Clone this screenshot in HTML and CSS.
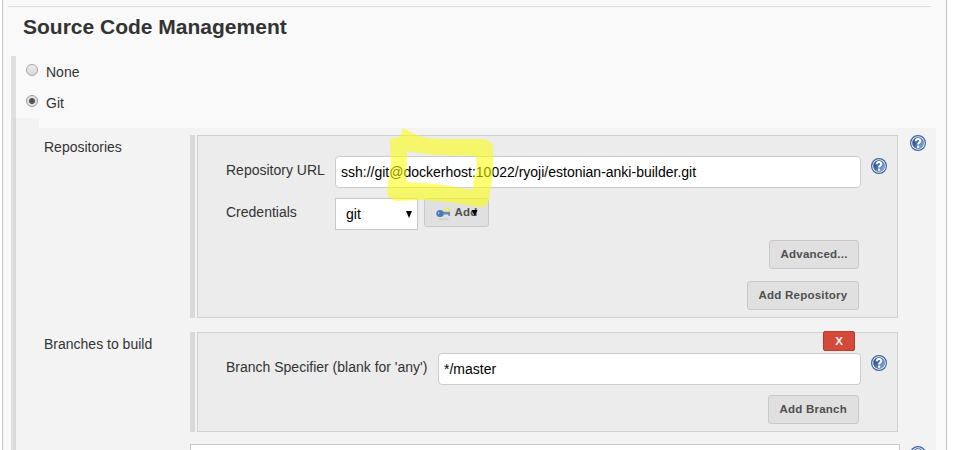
FILE: index.html
```html
<!DOCTYPE html>
<html lang="en">
<head>
<meta charset="utf-8">
<title>Source Code Management</title>
<link rel="stylesheet" href="styles.css">
</head>
<body>
<svg class="defs" width="0" height="0" aria-hidden="true">
  <defs>
    <linearGradient id="blue" x1="0" y1="0" x2="1" y2="0.6"><stop offset="0.1" stop-color="#1f4583"/><stop offset="1" stop-color="#7ea3d3"/></linearGradient>
    <symbol id="help" viewBox="0 0 16 16">
      <circle cx="8" cy="8" r="7.4" fill="#fff" stroke="#3d639f" stroke-width="1.2"/>
      <circle cx="8" cy="8" r="5.7" fill="url(#blue)" stroke="#3d639f" stroke-width="0.4"/>
      <path d="M5.7 6.3C5.8 3.3 10.3 3.3 10.3 5.9C10.3 7.6 8.1 7.6 8.1 9.6" fill="none" stroke="#fff" stroke-width="2"/>
      <rect x="7" y="10.6" width="2.2" height="2.1" fill="#fff"/>
    </symbol>
  </defs>
</svg>
<main class="page">
  <hr class="rule">
  <h1>Source Code Management</h1>
  <section class="scm">
    <label class="choice"><span class="radio"></span>None</label>
    <label class="choice"><span class="radio on"></span>Git</label>
    <div class="tab"></div>
    <div class="git">
      <div class="row repos">
        <div class="name">Repositories</div>
        <div class="bar"></div>
        <div class="box">
          <div class="line url">
            <span class="label">Repository URL</span>
            <div class="input">ssh://git@dockerhost:10022/ryoji/estonian-anki-builder.git</div>
            <svg class="help"><use href="#help"/></svg>
          </div>
          <div class="line cred">
            <span class="label">Credentials</span>
            <div class="select">git<i class="arrow"></i></div>
            <div class="button add">
              <svg class="key" viewBox="0 0 16 16"><ellipse cx="8" cy="14" rx="6" ry="1" fill="#d0d0d0"/><path d="M6 6.2H15V10.5H13V9H6Z" fill="#698bb5"/><ellipse cx="4.3" cy="8" rx="4" ry="3.8" fill="#4b7bba"/><circle cx="2.7" cy="7.5" r="0.8" fill="#d7e3f0"/><circle cx="12.2" cy="3.6" r="2.4" fill="#f1e64d"/><circle cx="12.2" cy="3.6" r="1" fill="#fff8a0"/></svg>
              <span>Add</span><i class="arrow"></i>
            </div>
          </div>
          <div class="button advanced">Advanced...</div>
          <div class="button repository">Add Repository</div>
          <svg class="marker" width="110" height="84" viewBox="386 126 110 84"><path fill-rule="evenodd" d="M403 128L417 135C424 138 434 139 447 139L484 139Q493 141 493 148V173L489 200Q487 208 480 207L447 202L424 200L397 201Q387 199 387 191L391 162L390 141Q392 137 400 137ZM407 151V163L406 182L437 184L454 187L473 190L474 176L477 172L476 156L437 155L420 153Z"/></svg>
        </div>
        <svg class="help"><use href="#help"/></svg>
      </div>
      <div class="row branches">
        <div class="name">Branches to build</div>
        <div class="bar"></div>
        <div class="box">
          <div class="delete">X</div>
          <div class="line spec">
            <span class="label wide">Branch Specifier (blank for 'any')</span>
            <div class="input">*/master</div>
            <svg class="help"><use href="#help"/></svg>
          </div>
          <div class="button branch">Add Branch</div>
        </div>
      </div>
      <div class="row next">
        <div class="name"></div>
        <div class="field"></div>
        <svg class="help"><use href="#help"/></svg>
      </div>
    </div>
  </section>
</main>
</body>
</html>
```
FILE: styles.css
```css
* { box-sizing: border-box; }
html, body { height: 450px; overflow: hidden; }
body { margin: 0; background: #fff; color: #333; font: 14px/20px "Liberation Sans", Arial, sans-serif; }
.defs { position: absolute; }
.page { width: 945px; height: 450px; margin-left: 2px; overflow: hidden; border: solid #c4c4c4; border-width: 0 1px; background: #f9f9f9; }
.rule { height: 1px; margin: 6px 15px 0 5px; border: 0; background: #dcdcdc; }
h1 { height: 49px; margin: 0 0 0 20px; padding-top: 8px; font-size: 21px; line-height: 24px; }
.scm { margin-left: 8px; width: 925px; height: 394px; border-left: 5px solid #dfdfdf; }
.choice { display: flex; height: 31px; padding: 6px 0 0 10px; }
.radio { width: 12px; height: 12px; margin: 2px 8px 0 0; border: 1px solid #a5a5a5; border-radius: 50%; background: linear-gradient(#ededed, #d9d9d9); }
.on { border-color: #999; background: radial-gradient(circle, #555 0 2.6px, #e3e3e3 3.4px); }
.tab { width: 26px; height: 10px; margin-left: -3px; background: #f3f3f3; border-left: 3px solid #d9d9d9; }
.git { height: 322px; margin-left: -3px; width: 923px; border-left: 3px solid #d9d9d9; background: #f3f3f3; padding-top: 7px; }
.row { display: flex; padding-left: 28px; }
.name { width: 146px; padding-top: 2px; }
.bar { width: 5px; background: #d9d9d9; }
.box { position: relative; width: 701px; margin-left: 2px; border: 1px solid #d0d0d0; background: #ececec; display: flex; flex-direction: column; align-items: flex-end; padding-right: 38px; }
.repos { height: 183px; margin-bottom: 14px; }
.repos > .help { margin-left: 12px; }
.branches { height: 100px; margin-bottom: 12px; }
.help { width: 16px; height: 16px; flex: none; }
.line { display: flex; align-self: flex-start; width: 663px; padding-left: 28px; flex: none; }
.url { margin-top: 20px; height: 32px; }
.label { width: 109px; padding-top: 4px; flex: none; }
.input { flex: 1; height: 32px; border: 1px solid #ccc; border-radius: 4px; background: #fff; color: #000; padding: 5px 5px; }
.line .help { margin: 2px -26px 0 10px; }
.cred { height: 32px; margin-top: 10px; }
.select { display: flex; width: 83px; height: 32px; border: 1px solid #c8c8c8; background: #fff; color: #000; padding: 5px 5px 0 10px; justify-content: space-between; }
.arrow { width: 6px; height: 7px; margin-top: 7px; background: #000; clip-path: polygon(0 0, 100% 0, 50% 100%); }
.button { height: 29px; flex: none; padding: 0 10.5px; border: 1px solid #c9c9c9; border-radius: 3px; background: #e0e0e0; color: #4f4f4f; font-weight: bold; font-size: 11.5px; letter-spacing: .23px; line-height: 27px; white-space: nowrap; }
.advanced { width: 90px; margin: 9px 0 12px; }
.repository { width: 112px; }
.branch { width: 91px; }
.add { display: flex; width: 65px; margin: 0 0 0 6px; }
.cred + .advanced { margin-top: 10px; }
.key { width: 15px; height: 15px; margin: 7px 4px 0 0; flex: none; }
.add .arrow { height: 6px; margin: 11px 0 0 -6px; flex: none; }
.marker { position: absolute; left: 188px; top: -10px; fill: #ffff00; opacity: .55; }
.delete { width: 32px; height: 20px; margin: -2px 4px 0 0; border: 1px solid #bf3829; border-radius: 2px; background: #d34a3b; color: #eee; font-size: 11.5px; font-weight: bold; text-align: center; line-height: 19px; }
.spec { margin: 2px 0 10px; }
.wide { width: 212px; }
.field { width: 710px; height: 30px; border: 1px solid #c8c8c8; background: #fff; }
.next .help { margin: 2px 0 0 10px; }
```
